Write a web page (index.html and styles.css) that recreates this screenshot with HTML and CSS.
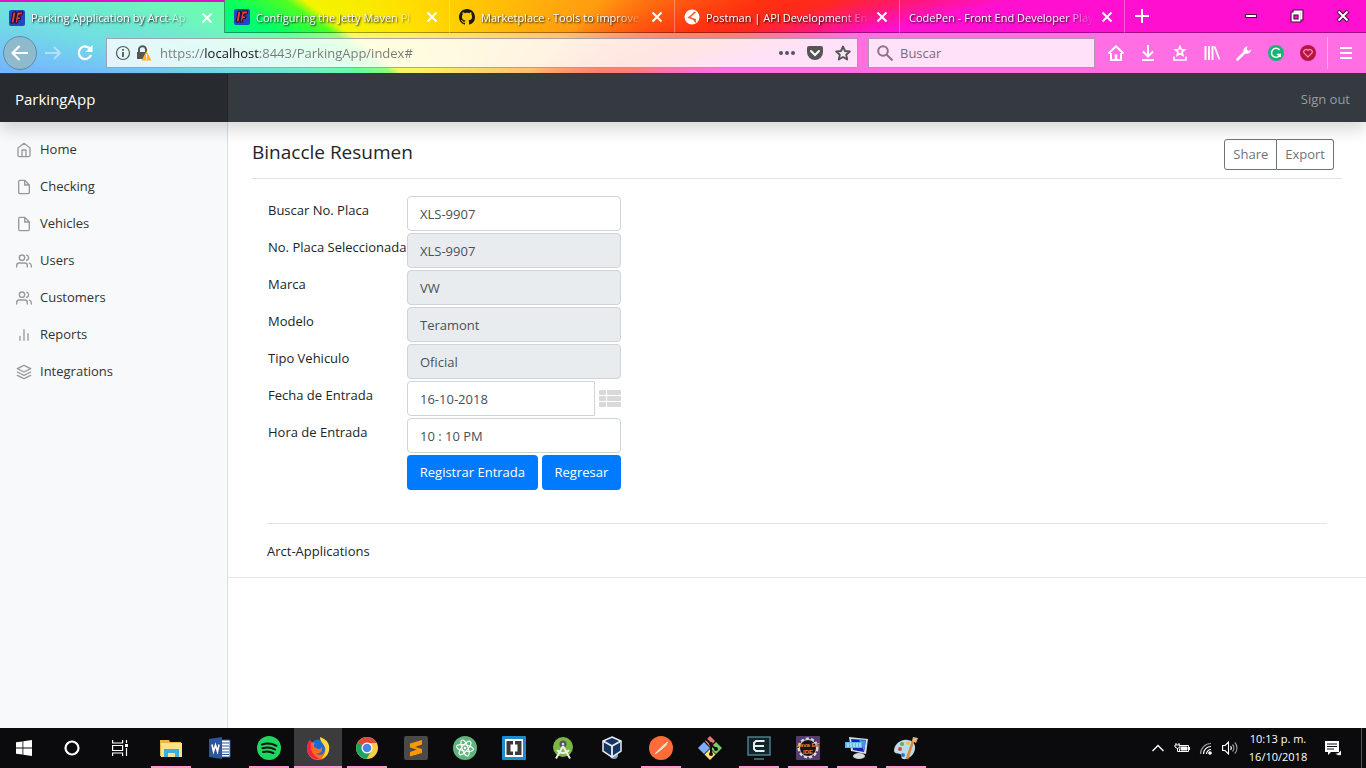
FILE: index.html
```html
<!DOCTYPE html>
<html lang="es">
<head>
<meta charset="utf-8">
<title>Parking Application by Arct-Applications</title>
<link rel="stylesheet" href="styles.css">
</head>
<body>
<div class="chrome">
  <div class="tabs">
    <div class="tab tab-active">
      <svg class="i16" viewBox="0 0 16 16"><rect width="16" height="16" rx="2" fill="#1f49c4"/><path d="M4 2h3L5 13H2zM8 2h6l-1 3h-3l-.4 2H12l-.5 2.500H9L8.500 13H6z" fill="#f03a2a" stroke="#160b35"/></svg>
      <span class="tab-label">Parking Application by Arct-Ap</span>
      <button class="close" aria-label="Cerrar"><svg class="i12" viewBox="0 0 12 12"><path d="M1.500 1.500l9 9M10.500 1.500l-9 9"/></svg></button>
    </div>
    <div class="tab">
      <svg class="i16" viewBox="0 0 16 16"><rect width="16" height="16" rx="2" fill="#1f49c4"/><path d="M4 2h3L5 13H2zM8 2h6l-1 3h-3l-.4 2H12l-.5 2.500H9L8.500 13H6z" fill="#f03a2a" stroke="#160b35"/></svg>
      <span class="tab-label">Configuring the Jetty Maven Pl</span>
      <button class="close" aria-label="Cerrar"><svg class="i12" viewBox="0 0 12 12"><path d="M1.500 1.500l9 9M10.500 1.500l-9 9"/></svg></button>
    </div>
    <div class="tab">
      <svg class="i16" viewBox="0 0 16 16"><path fill="#1b1a10" fill-rule="evenodd" d="M8 0C3.580 0 0 3.580 0 8c0 3.540 2.290 6.530 5.470 7.590.4.070.55-.17.55-.38 0-.19-.01-.82-.01-1.490-2.010.37-2.530-.49-2.690-.94-.09-.23-.48-.94-.82-1.130-.28-.15-.68-.52-.01-.53.63-.01 1.080.58 1.230.82.72 1.210 1.870.87 2.330.66.07-.52.28-.87.51-1.070-1.780-.2-3.640-.89-3.640-3.950 0-.87.31-1.590.82-2.150-.08-.2-.36-1.020.08-2.120 0 0 .67-.21 2.200.82.64-.18 1.320-.27 2-.27s1.360.09 2 .27c1.530-1.040 2.200-.82 2.200-.82.44 1.100.16 1.920.08 2.120.51.56.82 1.270.82 2.150 0 3.070-1.870 3.750-3.650 3.950.29.25.54.73.54 1.480 0 1.070-.01 1.930-.01 2.200 0 .21.15.46.55.38A8.010 8.010 0 0016 8c0-4.420-3.580-8-8-8z"/></svg>
      <span class="tab-label">Marketplace · Tools to improve</span>
      <button class="close" aria-label="Cerrar"><svg class="i12" viewBox="0 0 12 12"><path d="M1.500 1.500l9 9M10.500 1.500l-9 9"/></svg></button>
    </div>
    <div class="tab">
      <svg class="i16" viewBox="0 0 16 16"><circle cx="8" cy="8" r="7.500" fill="#fff"/><path d="M11.500 3L5 8.500 12 11M7 7l4-4M9 9.500l3 4" fill="none" stroke="#ff5a2a" stroke-width="1.600"/></svg>
      <span class="tab-label">Postman | API Development En</span>
      <button class="close" aria-label="Cerrar"><svg class="i12" viewBox="0 0 12 12"><path d="M1.500 1.500l9 9M10.500 1.500l-9 9"/></svg></button>
    </div>
    <div class="tab">
      <span class="tab-label">CodePen - Front End Developer Play</span>
      <button class="close" aria-label="Cerrar"><svg class="i12" viewBox="0 0 12 12"><path d="M1.500 1.500l9 9M10.500 1.500l-9 9"/></svg></button>
    </div>
    <button class="new-tab" aria-label="Nueva pestaña"><svg class="i16" viewBox="0 0 16 16"><path d="M8 1v14M1 8h14" stroke="#fff" stroke-width="2"/></svg></button>
    <div class="win">
      <button aria-label="Minimizar"><svg class="i16" viewBox="0 0 16 16"><path d="M2 6h12v4H2z" fill="#4a0a3c"/><path d="M3 7h10v2H3z" fill="#fff"/></svg></button>
      <button aria-label="Restaurar"><svg class="i16" viewBox="0 0 16 16" fill="none"><path d="M5.500 5V3.500h7v7H11M3.500 5.500h7v7h-7z" stroke="#4a0a3c" stroke-width="4"/><path d="M5.500 4.500v-1h7v7h-1M3.500 5.500h7v7h-7z" stroke="#fff" stroke-width="1.800"/></svg></button>
      <button aria-label="Cerrar ventana"><svg class="i16" viewBox="0 0 16 16" fill="none"><path d="M3 3l10 10M13 3L3 13" stroke="#4a0a3c" stroke-width="4"/><path d="M3.500 3.500l9 9M12.500 3.500l-9 9" stroke="#fff" stroke-width="2"/></svg></button>
    </div>
  </div>
  <div class="toolbar">
    <button class="back" aria-label="Atrás"><svg class="i20" viewBox="0 0 20 20" fill="none" stroke="#fff" stroke-width="2.200"><path d="M18 10H3M9.500 3L2.500 10l7 7"/></svg></button>
    <button class="tool faded" aria-label="Adelante"><svg class="i20" viewBox="0 0 20 20" fill="none" stroke="#fff" stroke-width="2"><path d="M2 10h15M11 4l6 6-6 6"/></svg></button>
    <button class="tool" aria-label="Recargar"><svg class="i20" viewBox="0 0 20 20" fill="none"><path d="M15.500 6.500A6.300 6.300 0 1 0 16 12" stroke="#fff" stroke-width="2.300"/><path d="M17.500 2v7h-7z" fill="#fff"/></svg></button>
    <div class="field url">
      <svg class="i16" viewBox="0 0 16 16" fill="none" stroke="#555"><circle cx="8" cy="8" r="6.500" stroke-width="1.200"/><path d="M8 7v5M8 4v1.800" stroke-width="1.800"/></svg>
      <svg class="i16" viewBox="0 0 16 16"><path d="M3 7V5a3.500 3.500 0 0 1 7-.5V7" fill="none" stroke="#555" stroke-width="2"/><path d="M1 7h9v7H1z" fill="#555"/><path d="M10.500 6l5 9.500h-10z" fill="#ffb01a"/><path d="M10.500 9v3.500M10.500 13.200v1.300" stroke="#fff" stroke-width="1.300"/></svg>
      <input class="address" type="text" aria-label="Dirección" value="https://localhost:8443/ParkingApp/index#">
      <svg class="i16 u-icon" viewBox="0 0 16 16" fill="#555"><circle cx="2" cy="8" r="2"/><circle cx="8" cy="8" r="2"/><circle cx="14" cy="8" r="2"/></svg>
      <svg class="i16 u-icon" viewBox="0 0 16 16"><path d="M2 1h12a2 2 0 0 1 2 2v4a8 8 0 0 1-16 0V3a2 2 0 0 1 2-2z" fill="#555"/><path d="M4 6l4 4 4-4" fill="none" stroke="#fff" stroke-width="2" stroke-linecap="round"/></svg>
      <svg class="i16" viewBox="0 0 16 16"><path d="M8 1.500l2 4.500 4.800.5-3.600 3.200 1 4.800L8 12l-4.200 2.500 1-4.800L1.200 6.500 6 6z" fill="none" stroke="#555" stroke-width="1.900" stroke-linejoin="round"/></svg>
    </div>
    <div class="field search">
      <svg class="i16" viewBox="0 0 16 16" fill="none" stroke="#8d7189" stroke-width="2"><circle cx="6" cy="6" r="4.800"/><path d="M9.500 9.500l6 6"/></svg>
      <input type="text" aria-label="Buscar" placeholder="Buscar">
    </div>
    <div class="tools">
      <button class="tool" aria-label="Inicio"><svg class="i16" viewBox="0 0 16 16" fill="none" stroke="#fff" stroke-width="2"><path d="M.5 8.500L8 1.300l7.500 7.200M3 8v7h10V8"/><path d="M8 9.500V15" stroke-width="2.600"/></svg></button>
      <button class="tool" aria-label="Descargas"><svg class="i16" viewBox="0 0 16 16" fill="none" stroke="#fff" stroke-width="2"><path d="M8 0v11M3 6.500l5 5 5-5M2 15h12"/></svg></button>
      <button class="tool" aria-label="Marcadores"><svg class="i16" viewBox="0 0 16 16" fill="none" stroke="#fff" stroke-width="1.700"><path d="M8 1.500l1.300 3 3.200.3-2.400 2.100.7 3.300L8 8.500l-2.800 1.700.7-3.300-2.400-2.100 3.200-.3zM2 11.500V15h12v-3.500"/></svg></button>
      <button class="tool" aria-label="Biblioteca"><svg class="i16" viewBox="0 0 16 16" fill="none" stroke="#fff" stroke-width="1.900"><path d="M1.500 1v14M5 1v14M8.500 1v14M10.500 1.500l5 13"/></svg></button>
      <button class="tool" aria-label="Herramientas"><svg class="i16" viewBox="0 0 16 16"><path d="M1.500 14.500L9 7" stroke="#fff" stroke-width="2.500" stroke-linecap="round"/><path d="M15 4.500L12.500 6 10.500 4l1.300-2.600A4 4 0 0 0 7.500 6.200L9.500 8.500A4 4 0 0 0 15 4.500z" fill="#fff"/></svg></button>
      <button class="tool" aria-label="Corrector"><svg class="i16" viewBox="0 0 16 16" fill="none"><circle cx="8" cy="8" r="8" fill="#15b573"/><path d="M11.500 5A4.500 4.500 0 1 0 12.200 9.500H8.800M12.300 9.200V12" stroke="#fff" stroke-width="1.500"/></svg></button>
      <button class="tool" aria-label="Favoritos"><svg class="i16" viewBox="0 0 16 16"><circle cx="8" cy="8" r="8" fill="#b71445"/><path d="M8 12L4.200 8.200a2.200 2.200 0 0 1 3.800-2.700 2.200 2.200 0 0 1 3.800 2.700z" fill="none" stroke="#ff8fae" stroke-width="1.200"/></svg></button>
    </div>
    <button class="tool menu" aria-label="Menú"><svg class="i16" viewBox="0 0 16 16"><path d="M2 3h12M2 8h12M2 13h12" stroke="#fff" stroke-width="2"/></svg></button>
  </div>
</div>

<header class="navbar">
  <a class="brand" href="#">ParkingApp</a>
  <a class="signout" href="#">Sign out</a>
</header>

<div class="page">
  <nav class="sidebar">
    <a href="#"><svg class="i16 f" viewBox="0 0 24 24"><path d="M3 9l9-7 9 7v11a2 2 0 0 1-2 2H5a2 2 0 0 1-2-2zM9 22V12h6v10"/></svg>Home</a>
    <a href="#"><svg class="i16 f" viewBox="0 0 24 24"><path d="M13 2H6a2 2 0 0 0-2 2v16a2 2 0 0 0 2 2h12a2 2 0 0 0 2-2V9zM13 2v7h7"/></svg>Checking</a>
    <a href="#"><svg class="i16 f" viewBox="0 0 24 24"><path d="M13 2H6a2 2 0 0 0-2 2v16a2 2 0 0 0 2 2h12a2 2 0 0 0 2-2V9zM13 2v7h7"/></svg>Vehicles</a>
    <a href="#"><svg class="i16 f" viewBox="0 0 24 24"><path d="M17 21v-2a4 4 0 0 0-4-4H5a4 4 0 0 0-4 4v2M23 21v-2a4 4 0 0 0-3-3.870M16 3.130a4 4 0 0 1 0 7.750"/><circle cx="9" cy="7" r="4"/></svg>Users</a>
    <a href="#"><svg class="i16 f" viewBox="0 0 24 24"><path d="M17 21v-2a4 4 0 0 0-4-4H5a4 4 0 0 0-4 4v2M23 21v-2a4 4 0 0 0-3-3.870M16 3.130a4 4 0 0 1 0 7.750"/><circle cx="9" cy="7" r="4"/></svg>Customers</a>
    <a href="#"><svg class="i16 f" viewBox="0 0 24 24"><path d="M18 20V10M12 20V4M6 20v-6"/></svg>Reports</a>
    <a href="#"><svg class="i16 f" viewBox="0 0 24 24"><path d="M12 2L2 7l10 5 10-5zM2 17l10 5 10-5M2 12l10 5 10-5"/></svg>Integrations</a>
  </nav>
  <main class="main">
    <div class="content">
      <div class="title-row">
        <h1>Binaccle Resumen</h1>
        <div class="group"><button>Share</button><button>Export</button></div>
      </div>
      <form class="form">
        <label for="buscar">Buscar No. Placa</label><input id="buscar" type="text" value="XLS-9907">
        <label for="placa">No. Placa Seleccionada</label><input id="placa" type="text" value="XLS-9907" readonly>
        <label for="marca">Marca</label><input id="marca" type="text" value="VW" readonly>
        <label for="modelo">Modelo</label><input id="modelo" type="text" value="Teramont" readonly>
        <label for="tipo">Tipo Vehiculo</label><input id="tipo" type="text" value="Oficial" readonly>
        <label for="fecha">Fecha de Entrada</label>
        <div class="date">
          <input id="fecha" type="text" value="16-10-2018">
          <button type="button" class="pick" aria-label="Elegir fecha"><svg viewBox="0 0 22 18" fill="#d9d9d9"><rect width="7" height="5" rx="1"/><rect x="8" width="14" height="5" rx="1"/><rect y="6" width="7" height="5" rx="1"/><rect x="8" y="6" width="14" height="5" rx="1"/><rect y="12" width="7" height="5" rx="1"/><rect x="8" y="12" width="14" height="5" rx="1"/></svg></button>
        </div>
        <label for="hora">Hora de Entrada</label><input id="hora" type="text" value="10 : 10 PM">
        <div class="actions"><button type="button">Registrar Entrada</button><button type="button">Regresar</button></div>
      </form>
      <footer class="footer">Arct-Applications</footer>
    </div>
  </main>
</div>

<div class="taskbar">
  <button class="task" aria-label="Inicio"><svg class="i16" viewBox="0 0 16 16" fill="#fff"><path d="M0 2.300L6.500 1.400v6.100H0zM7.300 1.300L16 0v7.500H7.300zM0 8.400h6.500v6.200L0 13.700zM7.300 8.400H16V16l-8.700-1.300z"/></svg></button>
  <button class="task" aria-label="Cortana"><svg class="i16" viewBox="0 0 16 16"><circle cx="8" cy="8" r="6.500" fill="none" stroke="#fff" stroke-width="2.200"/></svg></button>
  <button class="task" aria-label="Vista de tareas"><svg class="i16" viewBox="0 0 16 16" fill="none" stroke="#fff" stroke-width="1.200"><path d="M.6 0v3h10V0M.6 16v-3h10v3M.6 5.500h10v5H.6zM14.500 0v3M14.500 8v8"/><path d="M13 4h3v3h-3z" fill="#fff" stroke="none"/></svg></button>
  <div class="apps">
    <button class="task open" aria-label="Explorador"><svg class="i24" viewBox="0 0 24 24"><path d="M1 4h9l1 2h11v14H1z" fill="#e9b741"/><path d="M2 7h21v14H2z" fill="#fce08a"/><path d="M5 13h15v8h-4v-4H9v4H5z" fill="#3aaedf"/></svg></button>
    <button class="task" aria-label="Word"><svg class="i24" viewBox="0 0 24 24"><path d="M13 4h9v17h-9z" fill="#fff" stroke="#2b579a"/><path d="M14 7h7M14 10h7M14 13h7M14 16h7M14 18.500h7" stroke="#2b579a"/><path d="M1 3l13-2v22L1 21z" fill="#2b579a"/><path d="M4 8.500l1.500 7L7.500 9l2 6.500 1.500-7" fill="none" stroke="#fff" stroke-width="1.600"/></svg></button>
    <button class="task open" aria-label="Spotify"><svg class="i24" viewBox="0 0 24 24"><circle cx="12" cy="12" r="12" fill="#1ed760"/><path d="M5 8.500c5-1.500 10-1 14.500 1.300M5.500 12.300c4.500-1.300 9-.8 12.500 1.200M6 16c4-1 7.500-.6 10.500 1.100" fill="none" stroke="#111" stroke-width="2" stroke-linecap="round"/></svg></button>
    <button class="task open current" aria-label="Firefox"><svg class="i24" viewBox="0 0 24 24"><circle cx="12.500" cy="12" r="8.500" fill="#1b6ad6"/><path d="M14 2c7 3 9 6 9 11a11 11 0 0 1-22 0C1 9 2 6 4 4l1 2 4 1c-2 2-1 4 1 5 2 2 5 1 6-1 1 6-3 7-6 6 4 4 9 1 9-4 0-4-3-5-5-11z" fill="#ff6a1c"/><path d="M14 1c8 3 10 8 9 13-1 5-4 8-8 9 4-4 5-8 4-12-1-3-5-5-5-10z" fill="#ffd83a"/><path d="M1 12c0-3 1-6 3-8l1 3c-1 8 2 13 9 16C7 24 1 19 1 12z" fill="#ed234b"/></svg></button>
    <button class="task open" aria-label="Chrome"><svg class="i24" viewBox="0 0 24 24"><circle cx="12" cy="12" r="11" fill="#f9cd45"/><path d="M12 12L2.500 6.500A11 11 0 0 1 21.500 6.500L22 7H12z" fill="#db4a3c"/><path d="M2.500 6.500A11 11 0 0 0 11.500 23l5-8.500L12 12z" fill="#1da462"/><circle cx="12" cy="12" r="5.500" fill="#fff"/><circle cx="12" cy="12" r="4.300" fill="#4a86e8"/></svg></button>
    <button class="task" aria-label="Sublime Text"><svg class="i24" viewBox="0 0 24 24"><rect width="24" height="24" rx="2" fill="#4a4a4a"/><path d="M6 7.500L18 4v4.500L11 11l7 2v4L6 20.500V16l7-2.500-7-2z" fill="#ff9800"/></svg></button>
    <button class="task" aria-label="Atom"><svg class="i24" viewBox="0 0 24 24"><circle cx="12" cy="12" r="12" fill="#5fb57d"/><g fill="none" stroke="#fff"><ellipse cx="12" cy="12" rx="3" ry="8.500" transform="rotate(-20 12 12)"/><ellipse cx="12" cy="12" rx="3" ry="8.500" transform="rotate(40 12 12)"/><ellipse cx="12" cy="12" rx="3" ry="8.500" transform="rotate(100 12 12)"/></g><circle cx="12" cy="12" r="1.300" fill="#fff"/></svg></button>
    <button class="task" aria-label="Brackets"><svg class="i24" viewBox="0 0 24 24"><rect width="24" height="24" rx="1" fill="#1c8ccc"/><path d="M3 3h18v18H3z" fill="#fff"/><path d="M4.500 5H11v3.500H8.500v7H11V19H4.500zM19.500 5H13v3.500h2.500v7H13V19h6.500z" fill="#3a3a3a"/></svg></button>
    <button class="task" aria-label="Android Studio"><svg class="i24" viewBox="0 0 24 24"><circle cx="12" cy="11" r="10" fill="#78b843"/><circle cx="12" cy="8" r="3.500" fill="#555"/><path d="M12 10L5 22.500M12 10l7 12.500M6 14c3 4 9 4 12 0" fill="none" stroke="#eee" stroke-width="2"/><circle cx="12" cy="8" r="1.300" fill="#cde"/></svg></button>
    <button class="task" aria-label="VirtualBox"><svg class="i24" viewBox="0 0 24 24"><circle cx="14" cy="19" r="4" fill="#8a9bb8"/><path d="M12 1l9 4v10l-9 6-9-6V5z" fill="#17345e" stroke="#e7eef8" stroke-width="1.500"/><path d="M3 5l9 5 9-5M12 10v11" fill="none" stroke="#e7eef8" stroke-width="1.800"/></svg></button>
    <button class="task open" aria-label="Postman"><svg class="i24" viewBox="0 0 24 24"><circle cx="12" cy="12" r="12" fill="#ff6c37"/><path d="M6 18l4-4.500 6.500-6L18.500 6l-1.300 3.200-5.700 5zM7 17l9-8.500" fill="#ffc9b5" stroke="#ffe4da" stroke-width=".8"/></svg></button>
    <button class="task" aria-label="Git"><svg class="i24" viewBox="0 0 24 24"><path d="M12 0l5 5-5 6-5-6z" fill="#f27474"/><path d="M6 6l6 6-6 6-6-6z" fill="#7aaefa"/><path d="M18 6l6 6-6 6-6-6z" fill="#78ce64"/><path d="M12 13l5.500 5.500L12 24l-5.500-5.500z" fill="#ffe276"/><path d="M8 3l5 5v10M13 9l5 4" fill="none" stroke="#111" stroke-width="2"/><circle cx="13" cy="8" r="2" fill="#111"/><circle cx="18" cy="13" r="2" fill="#111"/><circle cx="13" cy="18" r="2" fill="#111"/></svg></button>
    <button class="task open" aria-label="Editor"><svg class="i24" viewBox="0 0 24 24" fill="none"><path d="M1 1h22v18H1z" fill="#10252b" stroke="#4f7d86" stroke-width="1.500"/><path d="M17.500 5H9L7 7v6l2 2h8.500M8 10h9" stroke="#e8eeee" stroke-width="2"/><path d="M7 23h10" stroke="#4f7d86" stroke-width="1.500"/></svg></button>
    <button class="task open" aria-label="Java EE IDE"><svg class="i24" viewBox="0 0 24 24"><rect width="24" height="24" rx="1" fill="#543b70"/><circle cx="12" cy="12" r="9" fill="#17131c" stroke="#ddd" stroke-width="3" stroke-dasharray="3 2"/><circle cx="12" cy="12" r="8.500" fill="#17131c" stroke="#ddd"/><text x="12" y="11" class="ide">Java EE</text><text x="12" y="18" class="ide">IDE</text></svg></button>
    <button class="task open" aria-label="Escritorio remoto"><svg class="i24" viewBox="0 0 24 24"><ellipse cx="14" cy="20" rx="6" ry="3" fill="#d5d8dc"/><path d="M4 1l19 2-2 15L6 15z" fill="#d8dde6"/><path d="M6 3l15 1-2 12L8 14z" fill="#1424a8"/><path d="M14 4l7 .5-2 11z" fill="#4b8ff0"/><path d="M0 6h17v6H0z" fill="#58b9ec"/><path d="M2 8h14M2 10h14" stroke="#e8f6ff" stroke-dasharray="2 1"/></svg></button>
    <button class="task open" aria-label="Paint"><svg class="i24" viewBox="0 0 24 24"><path d="M10 4c7-1 12 3 11 9-1 7-8 11-12 10-3-1 0-4-3-5s-5 0-6-3C0 10 4 5 10 4z" fill="#b9dcef"/><circle cx="6" cy="13" r="2" fill="#d84a3a"/><circle cx="8" cy="8" r="2" fill="#63b04b"/><circle cx="14" cy="7" r="2" fill="#f0c23c"/><circle cx="9" cy="19" r="2" fill="#3d6fd2"/><path d="M13 23l6-18" stroke="#d58a3e" stroke-width="2.500"/><path d="M18 5l1-4 5 1-2 5z" fill="#e6b47a"/></svg></button>
  </div>
  <div class="tray">
    <svg class="i16" viewBox="0 0 16 16" fill="none" stroke="#fff" stroke-width="1.400"><path d="M2.500 11L8 5.500l5.500 5.500"/></svg>
    <svg class="i16" viewBox="0 0 16 16" fill="none" stroke="#fff"><path d="M5.500 5.500h9v6h-9v-3M15.500 7v3M1 5h5v2L3.500 8.500 1 7zM2 3v2M5 3v2M3.500 8v3.500h2"/><path d="M7 7h6v3H7z" fill="#fff"/></svg>
    <svg class="i16" viewBox="0 0 16 16" fill="none" stroke="#fff" stroke-width="1.200"><path d="M8.500 14A4.500 4.500 0 0 1 13 9.500M5.500 14A7.500 7.500 0 0 1 13 6.500"/><path d="M2.500 14A10.500 10.500 0 0 1 13 3.500" opacity=".6"/><circle cx="12" cy="13" r="1.200" fill="#fff"/></svg>
    <svg class="i16" viewBox="0 0 16 16" fill="none" stroke="#fff" stroke-width="1.100"><path d="M.6 5.500h2.500L6.500 2v12L3 10.500H.6zM8.500 6a3 3 0 0 1 0 4"/><path d="M10.500 4.500a5 5 0 0 1 0 7M12.800 2.500a8 8 0 0 1 0 11" opacity=".6"/></svg>
    <div class="clock"><span>10:13 p. m.</span><span>16/10/2018</span></div>
    <svg class="i16" viewBox="0 0 16 16"><path d="M0 1h14v11H6l-3 3v-3H0z" fill="#fff"/><path d="M2 4h10M2 6.500h10M2 9h7" stroke="#111"/><path d="M16 7a4.500 4.500 0 1 1-6 6 5 5 0 0 0 6-6z" fill="#fff" stroke="#111" stroke-width=".8"/></svg>
  </div>
</div>
</body>
</html>
```
FILE: styles.css
```css
* { box-sizing: border-box; }
body {
  margin: 0;
  min-height: 100vh;
  display: flex;
  flex-direction: column;
  font: 13px/21px "Open Sans", "Noto Sans", sans-serif;
  color: #212529;
  background: #fff;
}
a { color: inherit; text-decoration: none; }
button, input { font: inherit; margin: 0; }
button { padding: 0; border: 0; background: none; color: inherit; }
svg { display: block; flex: none; }
.i12 { width: 12px; height: 12px; }
.i16 { width: 16px; height: 16px; }
.i20 { width: 20px; height: 20px; }
.i24 { width: 24px; height: 24px; }

/* browser window */
.chrome {
  border-bottom: 1px solid #2d3a55;
  background: conic-gradient(from 270deg at 34.5% 126px,
    #1a80ff 0deg, #1a88ff 7deg, #14c8d0 13deg, #10dcb0 17deg, #10f090 21deg, #00ff68 26deg, #50ff20 34deg,
    #f4f400 37deg, #ffe000 60deg, #ffcf00 80deg, #ffb808 110deg, #ff9c10 136deg,
    #ff6a10 146deg, #ff3010 157deg, #ff2820 161deg, #ff1870 164deg, #ff10d0 167deg, #ff10d0 360deg);
}
.tabs { display: flex; height: 33px; color: #fff; font-size: 11px; }
.tab {
  flex: 0 1 225px;
  min-width: 0;
  display: flex;
  align-items: center;
  gap: 6px;
  padding: 2px 10px 0 9px;
  border-right: 1px solid rgba(255, 255, 255, .3);
  border-bottom: 1px solid rgba(0, 0, 0, .35);
}
.tab-active {
  background: rgba(255, 255, 255, .4);
  border-top: 2px solid #e010c8;
  border-right-color: rgba(0, 60, 40, .5);
  border-bottom: 0;
  padding-top: 0;
}
.tab-label {
  flex: 1;
  min-width: 0;
  overflow: hidden;
  white-space: nowrap;
  text-shadow: 1px 1px 2px #000;
  mask-image: linear-gradient(to right, #000 calc(100% - 32px), transparent);
}
.close { stroke: #fff; stroke-width: 2; padding: 1px; }
.new-tab { width: 34px; display: flex; align-items: center; justify-content: center; border-bottom: 1px solid rgba(0, 0, 0, .35); }
.win { flex: 1; display: flex; justify-content: flex-end; border-bottom: 1px solid rgba(0, 0, 0, .35); }
.win button { width: 46px; display: flex; align-items: center; justify-content: center; }
.toolbar {
  display: flex;
  align-items: center;
  height: 40px;
  padding: 0 3px;
  background: rgba(255, 255, 255, .4);
}
.back {
  width: 34px;
  height: 34px;
  display: flex;
  align-items: center;
  justify-content: center;
  border: 1px solid #5d8ea8;
  border-radius: 50%;
  background: #8fb9cc;
}
.tool { width: 32px; height: 32px; display: flex; align-items: center; justify-content: center; }
.faded { opacity: .45; }
.field {
  display: flex;
  align-items: center;
  height: 30px;
  border: 1px solid rgba(80, 60, 80, .45);
  background: rgba(255, 255, 255, .8);
  font-size: 13px;
}
.field input { flex: 1; min-width: 0; border: 0; padding: 0; background: none; outline: 0; color: #6f6f6f; }
.url { flex: 1; margin-left: 5px; padding: 0 6px 0 8px; gap: 5px; }
.url .address {
  margin-left: 3px;
  color: transparent;
  background: linear-gradient(to right, #777 44px, #111 44px, #111 99px, #777 99px);
  background-clip: text;
}
.u-icon { margin-right: 7px; }
.search { width: 227px; margin-left: 10px; padding: 0 8px; gap: 7px; }
.search input::placeholder { color: #7d6a7a; opacity: 1; }
.tools { display: flex; margin: 0 3px 0 5px; }
.menu { width: 36px; border-left: 1px solid rgba(255, 255, 255, .35); }

/* application header */
.navbar {
  position: relative;
  z-index: 1;
  display: flex;
  height: 48px;
  background: #343a40;
  box-shadow: 0 8px 16px rgba(0, 0, 0, .15);
  line-height: 50px;
}
.brand {
  width: 228px;
  padding-left: 15px;
  background: #272b30;
  border-right: 1px solid #1f2327;
  color: #fff;
  font-size: 15px;
}
.signout { margin-left: auto; padding-right: 16px; color: #999c9f; }

/* application body */
.page { flex: 1; display: flex; }
.sidebar { width: 228px; padding-top: 9px; background: #f8f9fa; border-right: 1px solid #dcdddf; }
.sidebar a { display: flex; align-items: center; gap: 8px; height: 37px; padding-left: 16px; color: #333; }
.f { fill: none; stroke: #999; stroke-width: 2; stroke-linecap: round; stroke-linejoin: round; }
.main { flex: 1; min-width: 0; }
.content { padding: 17px 24px 15px; border-bottom: 1px solid #e2e3e4; }
.title-row {
  display: flex;
  justify-content: space-between;
  align-items: flex-start;
  padding-right: 8px;
  padding-bottom: 8px;
  border-bottom: 1px solid #dee2e6;
}
h1 { margin: 0; font-size: 19px; line-height: 26px; font-weight: 400; }
.group { display: flex; color: #6c757d; }
.group button { height: 31px; padding: 0 8px; border: 1px solid #6c757d; }
.group button:first-child { border-radius: 3px 0 0 3px; }
.group button:last-child { border-radius: 0 3px 3px 0; border-left: 0; }
.form {
  display: grid;
  grid-template-columns: 137px 214px;
  gap: 2px;
  padding: 17px 16px 33px;
}
.form label { padding-top: 4px; white-space: nowrap; }
.form input {
  width: 100%;
  height: 35px;
  min-width: 0;
  padding: 0 12px;
  border: 1px solid #ced4da;
  border-radius: 4px;
  background: #fff;
  color: #495057;
}
.form input[readonly] { background: #e9ecef; }
.date { display: flex; align-items: center; gap: 4px; }
.form .date input { flex: 1; border-radius: 4px 0 0 4px; }
.pick svg { width: 22px; height: 18px; }
.actions { grid-column: 2; display: flex; gap: 4px; }
.actions button { flex: auto; height: 35px; border-radius: 4px; background: #007bff; color: #fff; white-space: nowrap; }
.footer { margin: 0 15px; padding-top: 17px; border-top: 1px solid #e2e3e4; }

/* desktop taskbar */
.taskbar { display: flex; height: 40px; background: #0b0b0e; color: #fff; }
.task { width: 48px; height: 40px; display: flex; align-items: center; justify-content: center; }
.apps { display: flex; gap: 1px; margin-left: 3px; }
.open {
  background: linear-gradient(#f79ad0, #f79ad0) center bottom / 40px 2px no-repeat;
}
.current { background-color: #3c3c3e; background-size: 48px 2px; }
.ide { font: 700 6px "Liberation Sans", sans-serif; fill: #f08a24; text-anchor: middle; }
.tray { display: flex; align-items: center; gap: 8px; margin-left: auto; margin-right: 4px; padding-right: 20px; border-right: 1px solid #555; }
.clock { display: flex; flex-direction: column; align-items: center; width: 64px; margin-right: 7px; font-size: 11px; line-height: 18px; white-space: nowrap; }
```
